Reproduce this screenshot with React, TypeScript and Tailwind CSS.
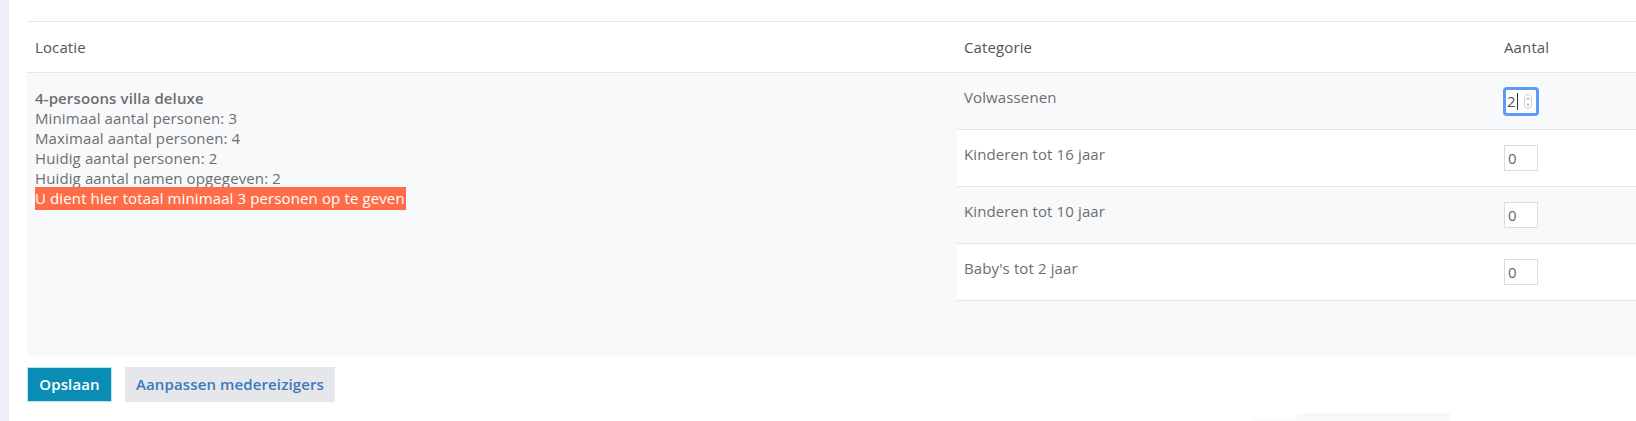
import React from "react";

const rows = [
  { label: "Volwassenen", value: "2", focused: true, bg: "bg-transparent" },
  { label: "Kinderen tot 16 jaar", value: "0", focused: false, bg: "bg-white" },
  { label: "Kinderen tot 10 jaar", value: "0", focused: false, bg: "bg-transparent" },
  { label: "Baby's tot 2 jaar", value: "0", focused: false, bg: "bg-white" },
];

function NumInput({ value, focused }: { value: string; focused: boolean }) {
  if (focused) {
    return (
      <div className="-mt-[1px] -ml-[1px] flex h-[29px] w-[36px] items-center rounded-[4px] border-[3px] border-[#5c9bf7] bg-white pl-[1px]">
        <span className="text-[15px] leading-none tracking-normal text-[#555]">{value}</span>
        <span className="ml-[1px] h-[17px] w-[1px] bg-[#333]" />
        <span className="ml-auto mr-[4px] flex h-[15px] w-[8px] flex-col items-center justify-center rounded-full border border-[#d0d0d0] text-[6px] leading-[6px] text-[#777]">
          <span>˄</span>
          <span>˅</span>
        </span>
      </div>
    );
  }
  return (
    <div className="flex h-[26px] w-[34px] items-center border border-[#dcdcdc] bg-white pl-[3px] text-[15px] tracking-normal text-[#666]">
      {value}
    </div>
  );
}

export default function App() {
  return (
    <div
      className="flex h-[421px] w-[1636px] overflow-hidden bg-white text-[15px] tracking-[0.12px] text-[#6e6e6e]"
      style={{ fontFamily: '"Open Sans", "Liberation Sans", sans-serif' }}
    >
      <div className="w-[9px] shrink-0 bg-[#eef0f5]" />
      <div className="flex min-w-0 flex-1 flex-col pl-[18px] pt-[21px]">
        {/* header */}
        <div className="grid h-[52px] grid-cols-[930px_539px_1fr] border-y border-[#e6e7ea] text-[15px] font-medium text-[#555]">
          <div className="flex items-center pl-[8px] pt-[1px]">Locatie</div>
          <div className="flex items-center pl-[7px] pt-[1px]">Categorie</div>
          <div className="flex items-center pl-[8px] pt-[1px]">Aantal</div>
        </div>
        {/* body */}
        <div className="grid h-[283px] grid-cols-[930px_1fr] bg-[#f8f9fb]">
          <div className="pl-[8px] pt-[15px] leading-[20px]">
            <div className="font-semibold">4-persoons villa deluxe</div>
            <div>Minimaal aantal personen: 3</div>
            <div>Maximaal aantal personen: 4</div>
            <div>Huidig aantal personen: 2</div>
            <div>Huidig aantal namen opgegeven: 2</div>
            <div className="mt-[-1px] inline-block h-[23px] bg-[#ff6d48] pr-[1px] leading-[23px] text-white">
              U dient hier totaal minimaal 3 personen op te geven
            </div>
          </div>
          <div className="flex flex-col">
            {rows.map((r) => (
              <div
                key={r.label}
                className={`grid h-[57px] grid-cols-[539px_1fr] border-b border-[#e3e5e8] ${r.bg}`}
              >
                <div className="pl-[7px] pt-[14px] leading-[20px]">{r.label}</div>
                <div className="pl-[8px] pt-[15px]">
                  <NumInput value={r.value} focused={r.focused} />
                </div>
              </div>
            ))}
          </div>
        </div>
        {/* buttons */}
        <div className="mt-[11px] flex gap-[13px]">
          <button className="h-[35px] w-[85px] border border-[#bfe3ee] bg-[#0a8db4] text-[15px] font-semibold text-white">
            Opslaan
          </button>
          <button className="h-[35px] w-[210px] bg-[#e5e7eb] text-[15px] font-semibold text-[#3a7abb]">
            Aanpassen medereizigers
          </button>
        </div>
        <div className="mt-[11px] flex items-end">
          <div className="ml-[1227px] h-[3px] w-[43px] bg-[#fafbfc]" />
          <div className="h-[8px] w-[153px] bg-[#f7f8fa]" />
        </div>
      </div>
    </div>
  );
}
